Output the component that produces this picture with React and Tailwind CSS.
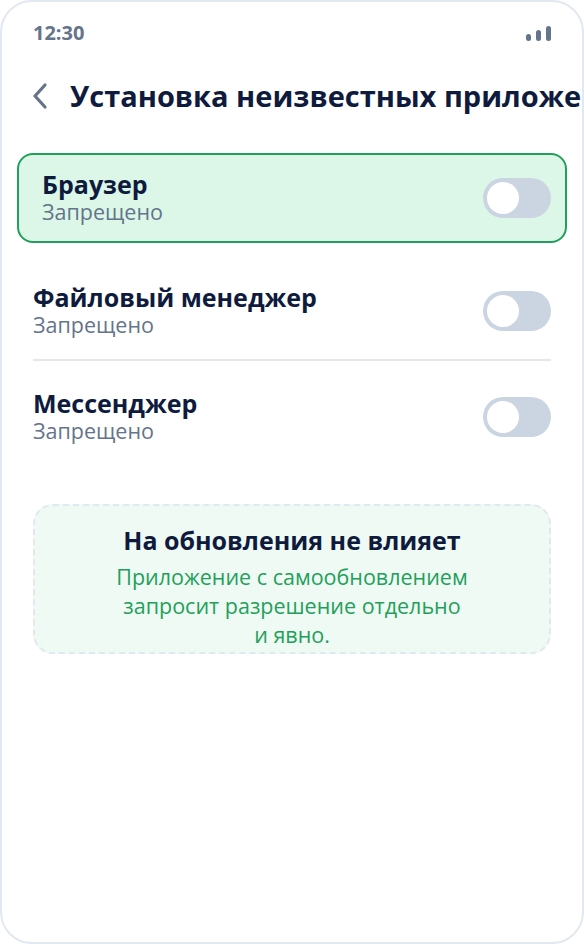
import { useState } from 'react';

const apps = [
  { id: 'browser', name: 'Браузер', highlighted: true },
  { id: 'files', name: 'Файловый менеджер' },
  { id: 'messenger', name: 'Мессенджер' },
];

function Toggle({ on, onChange }) {
  return (
    <button
      type="button"
      onClick={onChange}
      className={`flex h-[40px] w-[68px] shrink-0 items-center rounded-full px-[4px] ${
        on ? 'justify-end bg-[#22a05a]' : 'justify-start bg-[#cbd5e1]'
      }`}
    >
      <span className="h-[32px] w-[32px] rounded-full bg-white" />
    </button>
  );
}

function SignalIcon() {
  return (
    <div className="flex items-end gap-[5px] pt-[1px]">
      <span className="h-[7px] w-[5px] rounded-full bg-[#64748b]" />
      <span className="h-[11px] w-[5px] rounded-full bg-[#64748b]" />
      <span className="h-[15px] w-[5px] rounded-full bg-[#64748b]" />
    </div>
  );
}

function AppText({ name, on }) {
  return (
    <div>
      <p className="text-[25px] font-bold leading-[28px] text-[#0f1b3d]">{name}</p>
      <p className="text-[21.5px] leading-[28px] text-[#64748b]">{on ? 'Разрешено' : 'Запрещено'}</p>
    </div>
  );
}

export default function App() {
  const [allowed, setAllowed] = useState({});

  const toggle = (id) => setAllowed((prev) => ({ ...prev, [id]: !prev[id] }));

  return (
    <div
      className="h-[944px] w-[584px] overflow-hidden rounded-[32px] border-2 border-[#e2e8f0] bg-white"
      style={{ fontFamily: '"Open Sans", "Noto Sans", sans-serif' }}
    >
      <div className="flex h-[62px] items-center justify-between pl-[31px] pr-[31px]">
        <span className="text-[20px] font-bold text-[#64748b]">12:30</span>
        <SignalIcon />
      </div>

      <div className="flex h-[64px] items-center gap-[20px] whitespace-nowrap pl-[28px]">
        <svg width="20" height="28" viewBox="0 0 20 28" fill="none" className="shrink-0">
          <path d="M15 3 L5 14 L15 25" stroke="#64748b" strokeWidth="3.2" strokeLinecap="round" strokeLinejoin="round" />
        </svg>
        <h1 className="text-[29px] font-bold text-[#0f1b3d]">Установка неизвестных приложений</h1>
      </div>

      <div className="px-[31px] pt-[25px]">
        {apps.map((app, i) => {
          const on = !!allowed[app.id];
          if (app.highlighted) {
            return (
              <div
                key={app.id}
                className="-mx-[16px] mb-[20px] flex h-[90px] items-center justify-between rounded-[16px] border-2 border-[#22a05a] bg-[#dcf7e8] pl-[23px] pr-[14px]"
              >
                <AppText name={app.name} on={on} />
                <Toggle on={on} onChange={() => toggle(app.id)} />
              </div>
            );
          }
          const last = i === apps.length - 1;
          return (
            <div
              key={app.id}
              className={`flex items-center justify-between ${
                last ? 'h-[112px]' : 'h-[98px] border-b-2 border-[#e2e8f0]'
              }`}
            >
              <AppText name={app.name} on={on} />
              <Toggle on={on} onChange={() => toggle(app.id)} />
            </div>
          );
        })}

        <div className="mt-[31px] h-[150px] rounded-[20px] border-2 border-dashed border-[#e2e8f0] bg-[#f0faf4] px-[24px] pt-[18px] text-center">
          <p className="text-[25px] font-bold leading-[32px] text-[#0f1b3d]">На обновления не влияет</p>
          <p className="mt-[6px] text-[21.5px] leading-[29px] text-[#22a05a]">
            Приложение с самообновлением
            <br />
            запросит разрешение отдельно
            <br />и явно.
          </p>
        </div>
      </div>
    </div>
  );
}
